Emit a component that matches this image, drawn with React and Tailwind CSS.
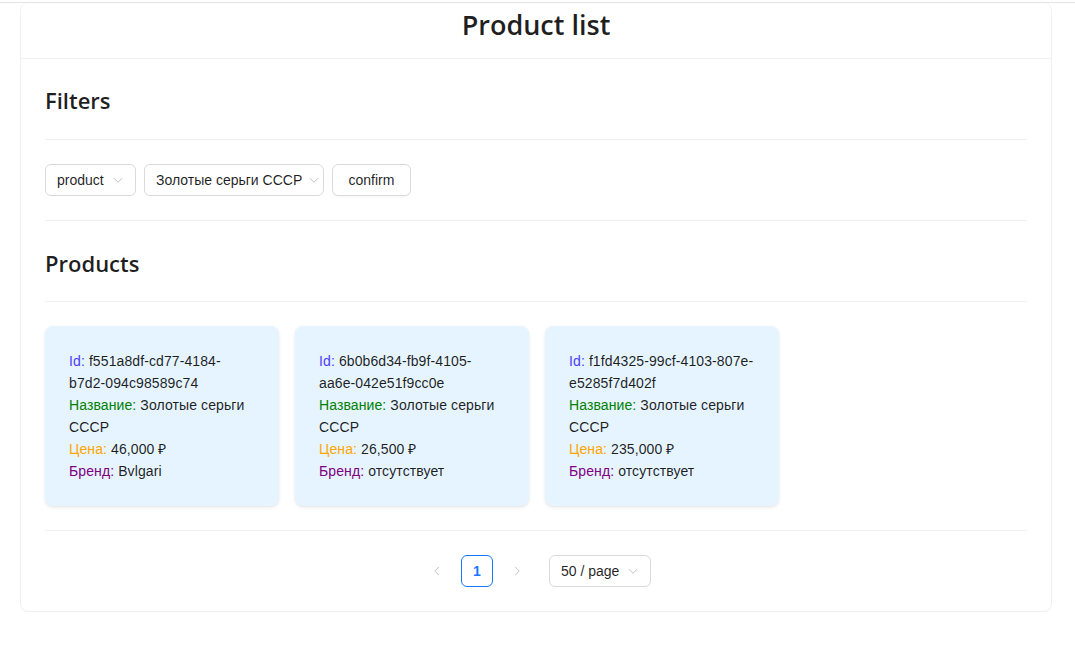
import React from "react";

const font = { fontFamily: '"Liberation Sans", Arial, sans-serif' };
const headFont = { fontFamily: '"Open Sans", "Noto Sans", sans-serif' };

const products = [
  { id: "f551a8df-cd77-4184-b7d2-094c98589c74", name: "Золотые серьги СССР", price: "46,000 ₽", brand: "Bvlgari" },
  { id: "6b0b6d34-fb9f-4105-aa6e-042e51f9cc0e", name: "Золотые серьги СССР", price: "26,500 ₽", brand: "отсутствует" },
  { id: "f1fd4325-99cf-4103-807e-e5285f7d402f", name: "Золотые серьги СССР", price: "235,000 ₽", brand: "отсутствует" },
];

const Chevron = ({ dir = "down", className = "" }) => {
  const d = {
    down: "M3 6 L8 11 L13 6",
    left: "M10 3 L5 8 L10 13",
    right: "M6 3 L11 8 L6 13",
  }[dir];
  return (
    <svg viewBox="0 0 16 16" className={className} fill="none" stroke="currentColor" strokeWidth="1.3" strokeLinecap="round" strokeLinejoin="round">
      <path d={d} />
    </svg>
  );
};

const Select = ({ value, className = "" }) => (
  <div className={`h-8 px-[11px] flex items-center justify-between gap-[6px] border border-[#d9d9d9] rounded-md bg-white text-sm text-[#000000e0] ${className}`}>
    <span className="whitespace-nowrap">{value}</span>
    <Chevron className="w-3 h-3 shrink-0 text-[#00000040]" />
  </div>
);

const Divider = () => <div className="border-t border-[#0505050f] my-6" />;

const ProductCard = ({ p }) => (
  <div className="w-[234px] p-6 rounded-lg bg-[#e6f4ff] shadow-[0_1px_2px_0_rgba(0,0,0,0.05),0_1px_6px_-1px_rgba(0,0,0,0.04),0_2px_4px_0_rgba(0,0,0,0.04)] text-sm leading-[22px] tracking-[0.1px] text-[#000000e0] break-words">
    <div>
      <span className="text-[#4a3dff]">Id:</span> {p.id}
    </div>
    <div>
      <span className="text-[#008000]">Название:</span> {p.name}
    </div>
    <div>
      <span className="text-[#ffa500]">Цена:</span> {p.price}
    </div>
    <div>
      <span className="text-[#800080]">Бренд:</span> {p.brand}
    </div>
  </div>
);

export default function App() {
  return (
    <div className="min-h-screen bg-white pt-[2px]" style={font}>
      <div className="border-t border-[#e3e3e3]">
        <div className="ml-[20px] mr-[23px] border border-[#f0f0f0] border-t-0 rounded-lg">
          <div className="h-[56px] border-b border-[#f0f0f0] flex justify-center">
            <h2 className="text-[27px] leading-[40px] font-semibold text-[#000000e0] pt-[2px]" style={headFont}>
              Product list
            </h2>
          </div>
          <div className="p-6">
            <h3 className="h-8 text-[22px] leading-[34px] font-semibold text-[#000000e0]" style={headFont}>
              Filters
            </h3>
            <Divider />
            <div className="flex gap-2">
              <Select value="product" className="w-[91px]" />
              <Select value="Золотые серьги СССР" className="w-[180px]" />
              <button className="h-8 w-[79px] border border-[#d9d9d9] rounded-md bg-white text-sm text-[#000000e0] shadow-[0_2px_0_rgba(0,0,0,0.02)]">
                confirm
              </button>
            </div>
            <Divider />
            <h3 className="h-8 text-[22px] leading-[36px] font-semibold text-[#000000e0]" style={headFont}>
              Products
            </h3>
            <Divider />
            <div className="flex gap-4">
              {products.map((p) => (
                <ProductCard key={p.id} p={p} />
              ))}
            </div>
            <Divider />
            <div className="flex justify-center items-center text-sm">
              <div className="w-8 h-8 mr-2 flex items-center justify-center text-[#00000040]">
                <Chevron dir="left" className="w-3 h-3" />
              </div>
              <div className="w-8 h-8 mr-2 flex items-center justify-center border border-[#1677ff] rounded-md text-[#1677ff] font-semibold">
                1
              </div>
              <div className="w-8 h-8 flex items-center justify-center text-[#00000040]">
                <Chevron dir="right" className="w-3 h-3" />
              </div>
              <div className="ml-4">
                <Select value="50 / page" className="w-[102px]" />
              </div>
            </div>
          </div>
        </div>
      </div>
    </div>
  );
}
